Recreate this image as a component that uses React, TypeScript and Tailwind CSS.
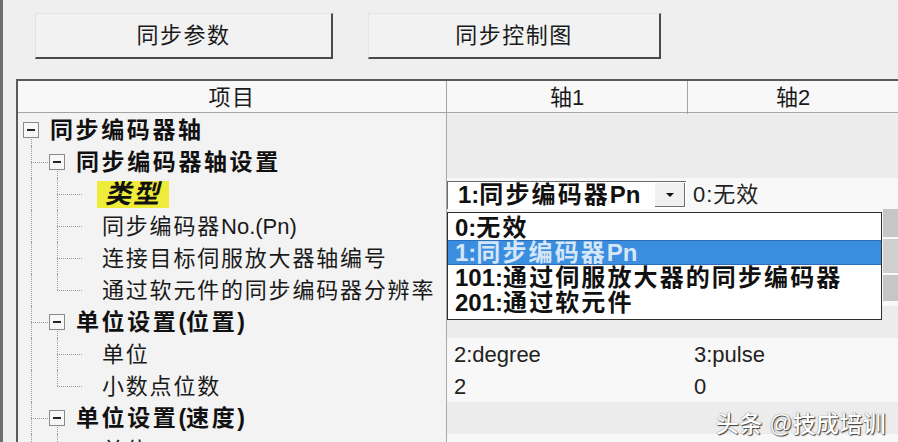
import type { ReactNode } from 'react';

const FONT = '[font-family:"Liberation_Sans","Noto_Sans_CJK_SC",sans-serif]';

type Line = 'full' | 'top' | 'down' | 'none';

// latin runs keep normal spacing, only the CJK glyphs get spread out
const Txt = ({ s }: { s: string }) => (
  <>
    {s.split(/([\x20-\x7e]+)/).map((part, i) =>
      /[\x20-\x7e]/.test(part) ? (
        <span key={i} className="tracking-normal">
          {part}
        </span>
      ) : (
        part
      ),
    )}
  </>
);

// one 26px column of the tree guide: dotted vertical, optional branch, optional box
const Guide = ({
  v = 'none',
  branch = false,
  box = false,
}: {
  v?: Line;
  branch?: boolean;
  box?: boolean;
}) => (
  <div className="relative w-[26px] h-full flex-none">
    {v === 'full' && (
      <div className="absolute left-[13px] top-0 bottom-0 border-l border-dotted border-[#9a9a9a]" />
    )}
    {v === 'top' && (
      <div className="absolute left-[13px] top-0 h-[16px] border-l border-dotted border-[#9a9a9a]" />
    )}
    {v === 'down' && (
      <div className="absolute left-[13px] top-[16px] bottom-0 border-l border-dotted border-[#9a9a9a]" />
    )}
    {branch && (
      <div className="absolute left-[13px] -right-[12px] top-[16px] border-t border-dotted border-[#9a9a9a]" />
    )}
    {box && (
      <div className="absolute left-[5px] top-[8px] w-[16px] h-[16px] border border-[#8a8a8a] bg-[#f7f7f7] flex items-center justify-center">
        <div className="w-[8px] h-[2px] bg-[#222]" />
      </div>
    )}
  </div>
);

const Row = ({
  guides,
  children,
  axis1,
  axis2,
  group = false,
}: {
  guides: ReactNode;
  children: ReactNode;
  axis1?: ReactNode;
  axis2?: ReactNode;
  group?: boolean;
}) => (
  <div className="grid grid-cols-[428px_241px_1fr] h-[32px] flex-none">
    <div className="flex items-stretch h-[32px]">
      {guides}
      <div className="flex items-center">{children}</div>
    </div>
    <div
      className={`relative border-l border-[#a8a8a8] flex items-center ${
        group ? 'bg-[#ececec]' : 'bg-[#f8f8f8]'
      }`}
    >
      {axis1}
    </div>
    <div className={`relative flex items-center ${group ? 'bg-[#ececec]' : 'bg-[#f8f8f8]'}`}>
      {axis2}
    </div>
  </div>
);

const Bold = ({ children }: { children: string }) => (
  <span className="ml-[6px] text-[23px] font-bold tracking-[2.6px] text-[#111] whitespace-nowrap">
    <Txt s={children} />
  </span>
);

const Leaf = ({ children }: { children: string }) => (
  <span className="ml-[6px] text-[22px] tracking-[1.8px] text-[#1a1a1a] whitespace-nowrap">
    <Txt s={children} />
  </span>
);

const Value = ({ children }: { children: ReactNode }) => (
  <span className="ml-[7px] text-[22px] text-[#222] whitespace-nowrap">{children}</span>
);

const leafGuides = (last = false) => (
  <>
    <Guide v="full" />
    <Guide v={last ? 'top' : 'full'} branch />
    <Guide />
  </>
);

const options = ['0:无效', '1:同步编码器Pn', '101:通过伺服放大器的同步编码器', '201:通过软元件'];

const Dropdown = () => (
  <div className="absolute left-0 top-[34px] z-10 flex">
    <div className="w-[435px] h-[108px] bg-white border border-[#2e2e2e] pt-[2px] flex flex-col">
      {options.map((o, i) => (
        <div
          key={o}
          className={`h-[25px] flex items-center pl-[7px] text-[24px] font-bold tracking-[2.1px] whitespace-nowrap ${
            i === 1 ? 'bg-[#3b8de0] text-[#d4e6f7] border-y border-[#2a6fb8]' : 'text-[#111]'
          }`}
        >
          <Txt s={o} />
        </div>
      ))}
    </div>
    <div className="ml-[1px] mt-[-3px] w-[15px] h-[92px] flex flex-col gap-[2px]">
      <div className="h-[28px] bg-[#c6c6c6]" />
      <div className="h-[34px] bg-[#cfcfcf]" />
      <div className="h-[26px] bg-[#c6c6c6]" />
    </div>
  </div>
);

const App = () => {
  return (
    <div
      className={`w-[898px] h-[442px] overflow-hidden bg-[#efefef] border-l-[3px] border-[#6f6f6f] ${FONT}`}
    >
      {/* top buttons */}
      <div className="flex pt-[13px] pl-[32px] gap-[35px]">
        <button className="w-[298px] h-[46px] bg-[#f2f2f2] border-t border-l border-[#e4e4e4] border-b-2 border-r-2 border-b-[#4a4a4a] border-r-[#4a4a4a] text-[22px] tracking-[1.5px] text-[#1a1a1a]">
          同步参数
        </button>
        <button className="w-[293px] h-[46px] bg-[#f2f2f2] border-t border-l border-[#e4e4e4] border-b-2 border-r-2 border-b-[#4a4a4a] border-r-[#4a4a4a] text-[22px] tracking-[1.5px] text-[#1a1a1a]">
          同步控制图
        </button>
      </div>

      {/* parameter grid */}
      <div className="relative mt-[20px] ml-[13px] border-t-2 border-l-2 border-[#5a5a5a] bg-[#f3f3f3] h-[400px] flex flex-col">
        <div className="grid grid-cols-[428px_241px_1fr] h-[32px] flex-none border-b border-[#a4a4a4] bg-[#f8f8f8] text-[22px] text-[#1a1a1a]">
          <div className="flex items-center justify-center tracking-[1.5px]">项目</div>
          <div className="flex items-center justify-center border-l border-[#a4a4a4]">轴1</div>
          <div className="flex items-center justify-center border-l border-[#a4a4a4]">轴2</div>
        </div>

        <div className="pt-[1px] flex flex-col">
          <Row group guides={<Guide box v="down" />}>
            <Bold>同步编码器轴</Bold>
          </Row>
          <Row
            group
            guides={
              <>
                <Guide v="full" branch />
                <Guide box v="down" />
              </>
            }
          >
            <Bold>同步编码器轴设置</Bold>
          </Row>
          <Row
            guides={leafGuides()}
            axis1={
              <>
                <div className="w-[239px] h-[28px] bg-white border-t border-l border-[#6a6a6a] flex items-center">
                  <span className="ml-[10px] flex-1 text-[24px] font-bold tracking-[2.1px] text-[#111] whitespace-nowrap">
                    <Txt s="1:同步编码器Pn" />
                  </span>
                  <div className="w-[30px] h-[24px] mr-[1px] bg-[#f0f0f0] border-b border-r border-[#707070] flex items-center justify-center">
                    <svg width="10" height="6" viewBox="0 0 10 6">
                      <path d="M1 1h8L5 5z" fill="#111" />
                    </svg>
                  </div>
                </div>
                <Dropdown />
              </>
            }
            axis2={<span className="ml-[6px] text-[22px] tracking-[1px] text-[#222]">0:无效</span>}
          >
            <span className="ml-[1px] px-[8px] h-[27px] flex items-center bg-[#eeec38] text-[26px] font-bold italic tracking-[2px] text-[#111]">
              类型
            </span>
          </Row>
          <Row guides={leafGuides()}>
            <Leaf>同步编码器No.(Pn)</Leaf>
          </Row>
          <Row guides={leafGuides()}>
            <Leaf>连接目标伺服放大器轴编号</Leaf>
          </Row>
          <Row guides={leafGuides(true)}>
            <Leaf>通过软元件的同步编码器分辨率</Leaf>
          </Row>
          <Row
            group
            guides={
              <>
                <Guide v="full" branch />
                <Guide box v="down" />
              </>
            }
          >
            <Bold>单位设置(位置)</Bold>
          </Row>
          <Row
            guides={leafGuides()}
            axis1={<Value>2:degree</Value>}
            axis2={<Value>3:pulse</Value>}
          >
            <Leaf>单位</Leaf>
          </Row>
          <Row guides={leafGuides(true)} axis1={<Value>2</Value>} axis2={<Value>0</Value>}>
            <Leaf>小数点位数</Leaf>
          </Row>
          <Row
            group
            guides={
              <>
                <Guide v="full" branch />
                <Guide box v="down" />
              </>
            }
          >
            <Bold>单位设置(速度)</Bold>
          </Row>
          <Row guides={leafGuides()}>
            <Leaf>单位</Leaf>
          </Row>
        </div>

        {/* watermark */}
        <div className="absolute right-[12px] top-[326px] text-[23px] font-medium tracking-[0.3px] text-white [text-shadow:1px_1px_1px_#3a3a3a,0_0_1px_#555]">
          头条 @技成培训
        </div>
      </div>
    </div>
  );
};

export default App;
